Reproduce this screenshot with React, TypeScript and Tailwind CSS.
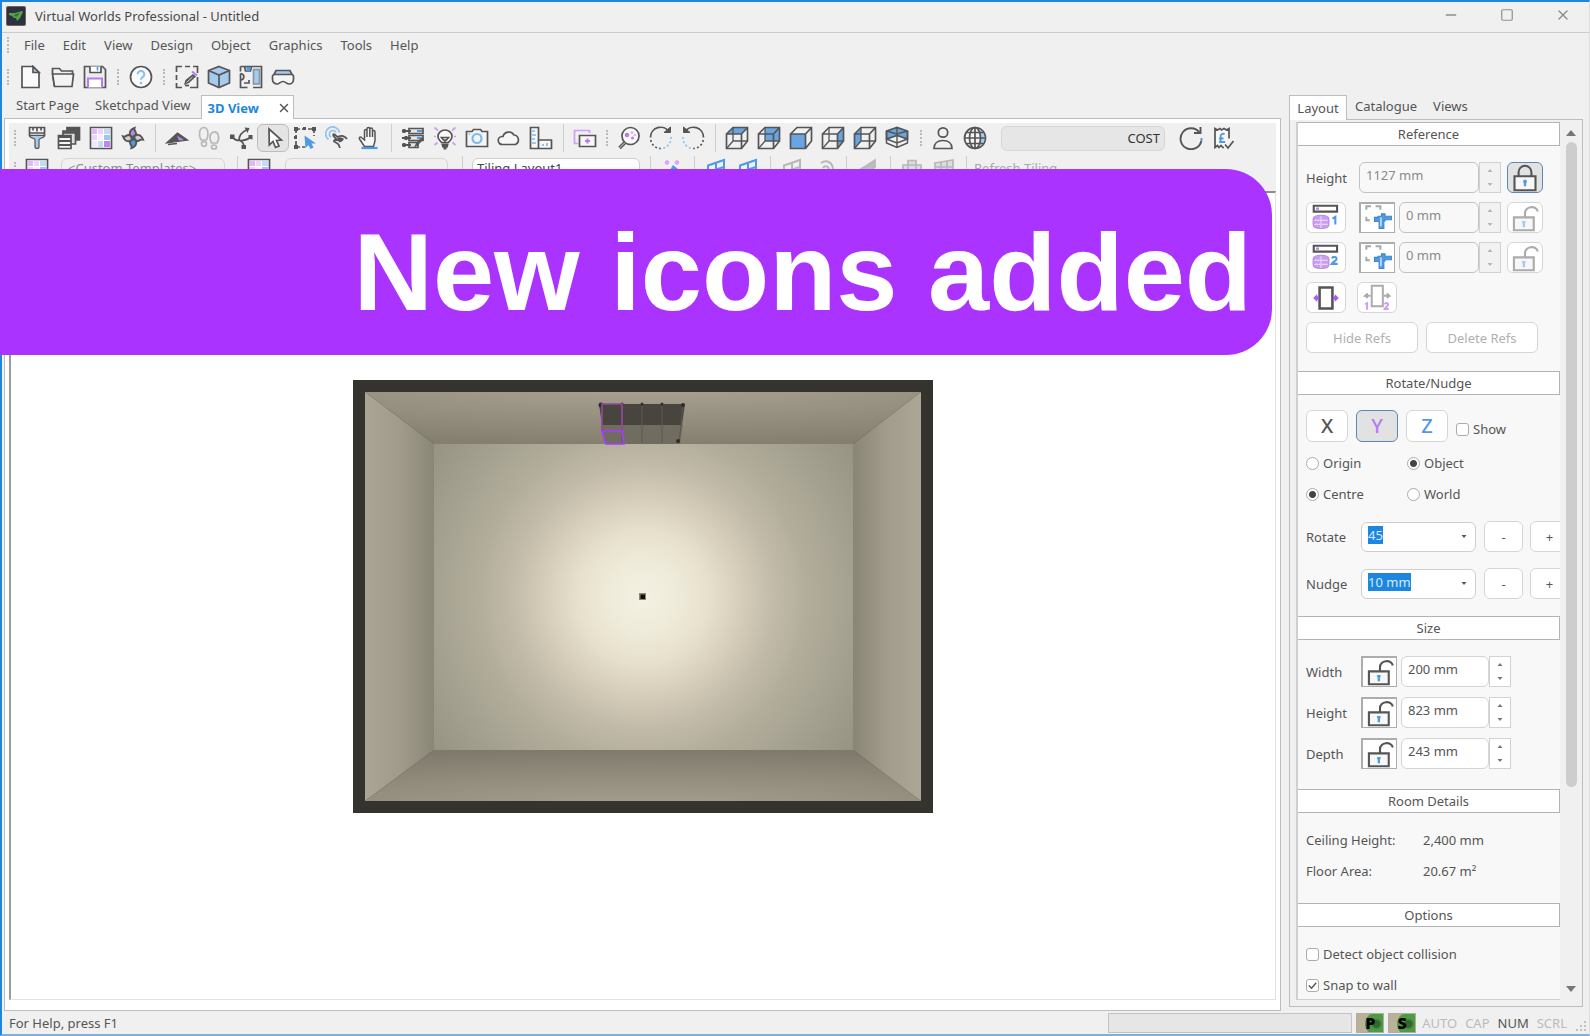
import { useState } from "react"
import type { ReactNode } from "react"
import { Minus, Square, X } from "lucide-react"
import clsx from "clsx"

const INK = "#555555"
const BLUE = "#4f9be3"
const SKY = "#a5cbee"
const VIOLET = "#b48ae8"
const LILAC = "#dcb8fa"
const MUTED = "#b8b8b8"

interface IconProps {
  children: ReactNode
  color?: string
  size?: string
}

function Icon({ children, color = INK, size = "size-6" }: IconProps) {
  return (
    <svg
      viewBox="0 0 24 24"
      className={clsx("shrink-0", size)}
      fill="none"
      stroke={color}
      strokeWidth="1.7"
      aria-hidden="true"
    >
      {children}
    </svg>
  )
}

/* ---------- Main toolbar icons ---------- */

const NewIcon = () => (
  <Icon>
    <path d="M3 1.5h11l6 6v15H3z" fill="#fafafa" />
    <path d="M14 1.5v6h6z" fill={SKY} />
  </Icon>
)

const OpenIcon = () => (
  <Icon>
    <path d="M3.5 21.5 1.5 8V3.500h7l2 2.500h11V9" />
    <path d="M1.500 9h21l-1.500 12.500H3.500z" fill="#f4f4f4" />
  </Icon>
)

const SaveIcon = () => (
  <Icon>
    <path d="M1.500 1.500h18l3 3v18h-21z" fill="#ececec" />
    <path d="M7 1.500v6h11v-6" fill="#fff" />
    <path d="M14.500 2v3.500" stroke={BLUE} />
    <path d="M5 22.500V13.500h14v9" stroke="#b57bf5" strokeWidth="2" fill="#fff" />
  </Icon>
)

const HelpIcon = () => (
  <Icon>
    <circle cx="12" cy="12" r="10.500" fill="#fafafa" />
    <path d="M8.700 9.200a3.300 3.300 0 1 1 5.200 2.700c-1.300.9-1.900 1.500-1.900 2.900" stroke="#8cc2f0" strokeWidth="2.200" />
    <circle cx="12" cy="18" r="1.300" fill="#8cc2f0" stroke="none" />
  </Icon>
)

const SketchpadIcon = () => (
  <Icon>
    <path d="M1.500 7V1.500H7M10 1.500h5M18 1.500h4.500V8M22.500 12v10.500H15M1.500 10v5M1.500 18v4.500H7" />
    <path d="m9 20 1.500-5L18 9l3 2.500-7 6.500z" fill={INK} stroke="none" />
    <path d="m11.500 17.500 6-5.500" stroke="#ddd" strokeWidth="1" />
    <path d="m17 6.500 5 4" stroke="#b57bf5" strokeWidth="2" />
    <path d="M10 20.500h4" />
  </Icon>
)

const CubeIcon = () => (
  <Icon>
    <path d="m12 1.500 10.500 4v12.500L12 22.500 1.500 18V5.500z" fill={SKY} />
    <path d="M1.500 5.500 12 10l10.500-4.500M12 10v12.500" />
  </Icon>
)

const PlanIcon = () => (
  <Icon>
    <path d="M1.500 1.500h21v21h-8.500" />
    <path d="M1.500 1.500v5M5.500 1.500l1 4.500h5l1-4.500" />
    <path d="M7 2h5l-1 4H8z" fill={BLUE} stroke="none" />
    <path d="M1.500 8.500C6 9 6 14.500 1.500 15M1.500 8.500V22.500h7M5 18h5v-3" />
    <rect x="14.500" y="4.500" width="6" height="14.500" fill={SKY} stroke="#8a97a6" />
  </Icon>
)

const GogglesIcon = () => (
  <Icon>
    <path d="M3 9.500 5 5.500h14l2 4" fill={SKY} />
    <path
      d="M3.500 9.500h17a2 2 0 0 1 2 2v3a4.500 4.500 0 0 1-4.500 4.500c-2.500 0-3-2.500-6-2.500s-3.500 2.500-6 2.500a4.500 4.500 0 0 1-4.500-4.500v-3a2 2 0 0 1 2-2z"
      fill="#f5f5f5"
    />
  </Icon>
)

/* ---------- View toolbar icons ---------- */

const BrushIcon = () => (
  <Icon>
    <path d="M4.500 1.500h15v8h-15z" fill="#f5f5f5" />
    <path d="M8 1.500v3M12 1.500v4M16 1.500v3M4.500 7h15" />
    <path d="M4.500 9.500c0 3 5.500 2 5.500 4.500v6.500a2 2 0 0 0 4 0V14c0-2.500 5.500-1.500 5.500-4.500z" fill={SKY} strokeWidth="1.200" />
  </Icon>
)

const LayersIcon = () => (
  <Icon>
    <path d="M10 1.500h12.500V14H10z" fill={INK} />
    <path d="M6 5h12.500v13H6z" fill="#ddd" />
    <path d="M6 6.500h12.500" strokeWidth="2.500" />
    <path d="M1.500 9.500H14v13H1.500z" fill="#f5f5f5" />
    <path d="M1.500 11H14M1.500 15H14M1.500 19H14" strokeWidth="2" />
  </Icon>
)

const SwatchIcon = () => (
  <Icon>
    <path d="M1.500 1.500h21v21h-21z" fill="#fff" />
    <g stroke="none">
      <path d="M3 3h5v5H3z" fill="#e3b5fb" />
      <path d="M9 3h5v5H9zM3 9h5v5H3z" fill="#efd3ff" />
      <path d="M15 3h6v5h-6zM9 15h5v6H9z" fill="#c3dcf5" />
      <path d="M15 9h6v5h-6z" fill="#9cc7f0" />
      <path d="M3 15h5v6H3z" fill="#f3e6fd" />
      <path d="M9 9h5v5H9z" fill="#faf0ff" />
      <path d="M15 15h6v6h-6z" fill="#c286f2" />
    </g>
  </Icon>
)

const FanIcon = () => (
  <Icon>
    <g strokeWidth="1.900">
      <path d="M12 12C7 9 8 4 13.500 2c-1 2.500 2 3.500 1.500 6z" fill={VIOLET} />
      <path d="M12 12c3-5 8-4 10 1.500-2.500-1-3.500 2-6 1.500z" fill="#d0d0d0" />
      <path d="M12 12c5 3 4 8-1.500 10 1-2.500-2-3.500-1.500-6z" fill={BLUE} />
      <path d="M12 12c-3 5-8 4-10-1.500 2.500 1 3.500-2 6-1.500z" fill="#d0d0d0" />
    </g>
    <circle cx="12" cy="12" r="2.500" fill={INK} stroke="none" />
  </Icon>
)

const PlaneIcon = () => (
  <Icon>
    <path d="m1.500 17 11-10 10 7z" fill={INK} strokeWidth="1.200" />
    <path d="m12 9.500 7 4.500-5 .5z" fill={VIOLET} stroke="none" />
    <path d="m3 18.500 9-1" />
  </Icon>
)

const FootstepsIcon = () => (
  <Icon color={MUTED}>
    <path d="M4 14C1 9 2.500 2 6.500 1.500c5 0 5.500 7 3 12.500z" />
    <ellipse cx="7" cy="18" rx="2.500" ry="2.300" />
    <path d="M14.500 17c-3-5-1.500-10.500 2.500-11s6.500 5.500 3 11z" />
    <ellipse cx="17" cy="21" rx="2.500" ry="2" />
  </Icon>
)

const BranchIcon = () => (
  <Icon>
    <path d="M3.500 11c1.500 2.500 4.500 3.500 7.500 3.500 4 0 7-.5 10-3M10 14.500C10 9 13 6 17.500 4M11 14.500c3 1.500 4 4 4 6.500" />
    <g fill={INK} stroke="none">
      <path d="m15.500 1.500 5 .5-2 5zM19.500 9h4v4.500l-4-1zM12.500 19h4.500v4h-4.500zM1 8.500h4.500V13H1z" />
    </g>
  </Icon>
)

const PointerIcon = () => (
  <Icon>
    <path d="m8 3 .3 16 3.700-3.500 2.500 6 3.500-1.500-2.500-5.500 5-.5z" fill="#fff" />
  </Icon>
)

const MarqueeIcon = () => (
  <Icon>
    <path d="M3 3h18v7M3 3v18h9" strokeDasharray="4 2" />
    <g fill={INK} stroke="none">
      <path d="M1 1h4v4H1zM19 1h4v4h-4zM1 19h4v4H1zM10 1h3v3h-3zM1 10h3v3H1z" />
    </g>
    <path d="m11.500 9.500 1 12.500 3-3 2 4 3-1.500-2-4h4.500z" fill={BLUE} stroke="none" />
  </Icon>
)

const TouchIcon = () => (
  <Icon>
    <path d="M3.500 13.500a7 7 0 1 1 11-7" stroke="#8fc3f0" />
    <path d="M6 11a3.500 3.500 0 1 1 5-4.500" stroke="#8fc3f0" />
    <path
      d="M8 8.500c1-1 2 0 4.500 2.500 3-1.500 7-1.500 9.500 2M8 8.500c0 2 3 4 4 5.500-2 0-3.500 0-3 1.500 2 1 3.500 1.500 4.500 3l1.500 3.500"
      strokeWidth="1.800"
    />
    <path d="M12 12c3-1.500 5-.5 7 1l-2 2.500-3 1z" fill={INK} stroke="none" />
  </Icon>
)

const HandIcon = () => (
  <Icon>
    <path
      d="M7.500 20.500 2.500 13c-.8-1.600 1-2.600 2-1.500L7.500 14V5c0-2 2.500-2 2.500 0v6V3c0-2 2.800-2 2.800 0v8V3.500c0-2 2.700-2 2.700 0V11 6c0-1.900 2.500-1.900 2.500 0v9l-1.500 5.500z"
      fill="#f7f7f7"
      strokeWidth="1.500"
    />
    <path d="M4.500 22h16" stroke={BLUE} strokeWidth="2.200" />
  </Icon>
)

const ListEditIcon = () => (
  <Icon>
    <path d="M8 2.500h14v5H8zM8 9.500h14v5H8zM8 16.500h9v5H8z" fill="#e6e6e6" />
    <path d="M1 5h9M1 12h9M1 19h9" strokeWidth="2.200" />
    <path d="M3 3v4M5 10v4M3 17v4" strokeWidth="3" />
    <path d="M16 5h5M16 12h4" stroke={BLUE} strokeWidth="2" />
    <path d="m13 22 2-5 6-6 2 2-6 6z" fill={INK} stroke="none" />
  </Icon>
)

const BulbIcon = () => (
  <Icon>
    <path d="M8.500 16.500c-1.500-2-3.500-3-3.500-6a7 6.500 0 0 1 14 0c0 3-2 4-3.500 6z" fill="#fafafa" />
    <path d="M8.500 11.500h7L13.500 14h-3zM12 14v3" />
    <path d="M8.500 18.500h7M9 20.500h6M10.500 22.500h3" strokeWidth="1.800" />
    <path d="M1.500 1.500 5 4.500M22.500 1.500 19 4.500M1 10.500h2M21 10.500h2M1.500 19l3-2.500M22.500 19l-3-2.500" stroke="#cf9df5" />
  </Icon>
)

const CameraIcon = () => (
  <Icon>
    <path d="M1.500 5.500H7L8.500 3.500h7L17 5.500h5.500v15h-21z" fill="#f5f5f5" />
    <circle cx="12" cy="12.500" r="4.500" stroke="#7fb9ec" strokeWidth="2.200" />
    <path d="M3.500 8h2" stroke={SKY} />
  </Icon>
)

const CloudIcon = () => (
  <Icon>
    <path d="M5.500 18.500a4 4 0 0 1-.5-8h1a6 6 0 0 1 11-1.500 5 5 0 0 1 1.500 9.500z" fill="#f7f7f7" />
  </Icon>
)

const RulerIcon = () => (
  <Icon>
    <path d="M1.500 1.500h8v12.500h13v8.500h-21z" fill="#f7f7f7" />
    <path d="M9.500 14v8.500" />
    <path d="M3 5h3M3 9h4M3 13h3M3 17h4M14 20v-2M18 20v-3" stroke="#7fb9ec" />
  </Icon>
)

const DuplicateIcon = () => (
  <Icon>
    <path d="M5 17.500H1.500V4.500h15V7" stroke="#cba3f2" />
    <path d="M6.500 9.500h16v11h-16z" fill="#f7f7f7" />
    <path d="M14.500 12.500v5M12 15h5" stroke="#b57bf5" strokeWidth="2" />
  </Icon>
)

const ZoomIcon = () => (
  <Icon>
    <circle cx="13.500" cy="10" r="8.500" fill="#fafafa" />
    <path d="m8 16.500-5.500 5.500" strokeWidth="3.600" />
    <path d="m8 16.500-5.500 5.500" stroke="#ddd" strokeWidth="1" />
    <g stroke="none" fill="#b57bf5">
      <circle cx="10" cy="9" r="2.300" />
      <circle cx="15.500" cy="12" r="1.500" />
      <circle cx="15" cy="6.500" r="1.500" fill={LILAC} />
      <circle cx="18" cy="9" r="1.300" fill={LILAC} />
    </g>
  </Icon>
)

const RotateRightIcon = () => (
  <Icon>
    <path d="M1.500 11.500A10 10 0 0 1 20 6" />
    <path d="M15 6.500h6.500V1z" fill={INK} strokeWidth="1" />
    <path d="M1.800 14a10 10 0 0 0 10 8.500" strokeDasharray="2 2.200" />
    <path d="M22 11a10.500 10.500 0 0 1-10 11.500" stroke="#8fc3f0" strokeDasharray="2 2.200" />
  </Icon>
)

const RotateLeftIcon = () => (
  <Icon>
    <path d="M22.500 11.500A10 10 0 0 0 4 6" />
    <path d="M9 6.500H2.500V1z" fill={INK} strokeWidth="1" />
    <path d="M22.200 14a10 10 0 0 1-10 8.500" strokeDasharray="2 2.200" />
    <path d="M2 11a10.500 10.500 0 0 0 10 11.500" stroke="#8fc3f0" strokeDasharray="2 2.200" />
  </Icon>
)

const FACES = {
  top: "M1.500 8 8 1.500h14.500L16.500 8z",
  back: "M8 1.500h14.500V15H8z",
  front: "M1.500 8h15v14.500h-15z",
  right: "M16.500 8 22.500 1.500V15l-6 7.500z",
  left: "M1.500 8 8 1.500V15l-6.500 7.500z",
}

function WireCube({ face }: { face: keyof typeof FACES }) {
  return (
    <Icon>
      <path d={FACES[face]} fill="#69a5e2" stroke="none" />
      <path d="M1.500 8h15v14.500h-15zM1.500 8 8 1.500h14.500V15l-6 7.500M16.500 8l6-6.500" />
      {face !== "front" && <path d="M8 1.500V15h14.500M8 15l-6.500 7.500" strokeWidth="1.300" />}
    </Icon>
  )
}

const RoomCubeIcon = () => (
  <Icon>
    <path d="m1.500 5 10.500-3.500L22.500 5v8L12 9.500 1.500 13z" fill="#69a5e2" />
    <path d="M1.500 5v12L12 21.500 22.500 17V5M1.500 5 12 8l10.500-3M12 1.500v20M1.500 13 12 17l10.500-4" strokeWidth="1.400" />
  </Icon>
)

const PersonIcon = () => (
  <Icon>
    <circle cx="12" cy="6.500" r="4.700" />
    <path d="M3 22.500c0-5 3.500-8 9-8s9 3 9 8z" />
  </Icon>
)

const GlobeIcon = () => (
  <Icon>
    <circle cx="12" cy="12" r="10.500" fill="#f5f5f5" />
    <path d="M17 3.500c6 4 6 13 0 17z" fill={SKY} stroke="none" />
    <path d="M12 1.500v21M1.500 12h21M3 6.500h18M3 17.500h18" />
    <ellipse cx="12" cy="12" rx="5.500" ry="10.500" />
  </Icon>
)

const RefreshIcon = () => (
  <Icon>
    <path d="M20.500 6.500A10.500 10.500 0 1 0 22.300 15" strokeWidth="1.900" />
    <path d="M15 7h6.500V1" strokeWidth="1.900" />
    <path d="M22.500 12v3" stroke={BLUE} strokeWidth="2" />
  </Icon>
)

const ReceiptIcon = () => (
  <Icon>
    <path d="M13 21.500h-1l-2-2-2 2-1.500-2-2.500 2V2.500l2.500 1.500 2.500-1.500L10.500 4 13 2.500 15.500 4 18 2.500v10" fill="#f7f7f7" />
    <path d="M13.500 8.500a2.200 2.200 0 0 0-3.800 1.500v4c0 1-.5 1.700-1.500 2h6M8 12.500h4.500" stroke={BLUE} strokeWidth="1.800" />
    <path d="m14 18.500 3 3.500 5.500-7" />
  </Icon>
)

/* ---------- Tiling toolbar icons ---------- */

const SparkleIcon = () => (
  <Icon>
    <path d="m4 22 9-15 5 4z" fill={BLUE} stroke="none" />
    <g fill={LILAC} stroke="#d68af5" strokeWidth="1">
      <circle cx="7" cy="4.500" r="1.700" />
      <circle cx="17" cy="4.500" r="1.700" />
    </g>
  </Icon>
)

function SlantTile({ muted = false }: { muted?: boolean }) {
  return (
    <Icon color={muted ? MUTED : BLUE}>
      <path d="M4 7.500 20 2v16L4 22zM12 5v15M4 14l16-5" strokeWidth="2" />
    </Icon>
  )
}

const GreyArcIcon = () => (
  <Icon color={MUTED}>
    <path d="M9 5c5-4 12-1 12 7M11 10c2-3 6-2 6 2" strokeWidth="2" />
  </Icon>
)

const GreyPenIcon = () => (
  <Icon color={MUTED}>
    <path d="m3 12 7-4 9-6v7l-9 8z" fill="#bdbdbd" />
  </Icon>
)

const GreyBoxesIcon = () => (
  <Icon color={MUTED}>
    <path d="M3 7h18v14H3zM8 7V2.500h8V7M8 7v10M16 7v10M3 12h18" fill="#dddddd" />
  </Icon>
)

const GreyRowsIcon = () => (
  <Icon color={MUTED}>
    <path d="M3 5 21 2v18H3zM9 4v16M15 3v17M3 9h18M3 14h18" fill="#dddddd" />
  </Icon>
)

/* ---------- Side panel icons ---------- */

function LockIcon({ open = false, muted = false }: { open?: boolean; muted?: boolean }) {
  return (
    <Icon color={muted ? "#ababab" : INK} size="size-7">
      <path d={open ? "M2.500 11.500h17v11h-17z" : "M3 10.500h18v12H3z"} strokeWidth="1.800" fill="#f7f7f7" />
      {open ? (
        <path d="M12 11.500V8c0-6 9.500-7.500 11-1.500" strokeWidth="1.800" />
      ) : (
        <path d="M6.500 10.500V7a5.500 5.500 0 0 1 11 0v3.500" strokeWidth="1.800" />
      )}
      <path d={open ? "M11 14.500v5.500M9.500 15.500h3" : "M12 13.500V19M10.500 15h3"} stroke={muted ? SKY : BLUE} strokeWidth="2" />
    </Icon>
  )
}

function RefPointIcon({ index }: { index: 1 | 2 }) {
  return (
    <Icon size="size-7">
      <path d="M1.500 1.500h20v5h-20z" fill="#fff" strokeWidth="1.800" />
      <path d="M3.500 4H6" stroke={VIOLET} strokeWidth="2" />
      <path d="M1 13c0-4.500 13.500-4.500 13.500 0v4.500c0 4.500-13.500 4.500-13.500 0z" fill="#c89ff0" stroke="#b98be6" strokeWidth="1" />
      <path d="M2 14h11.500M2 17.500h11.500M7.700 10.500v10" stroke="#e9d5fb" strokeWidth="1" />
      {index === 1 ? (
        <path d="m17.500 12.500 2.500-1.500v6.500" stroke={BLUE} strokeWidth="1.800" />
      ) : (
        <path d="M17 12.300c1-2 4.500-1.500 4 .7-.3 1.500-2.500 2-4 4h5" stroke={BLUE} strokeWidth="1.800" />
      )}
    </Icon>
  )
}

const TapeIcon = () => (
  <Icon size="size-7">
    <path d="M2 5V2h4M10 2h4v3M2 11v3h3" stroke="#a8a8a8" />
    <path d="M12 10.500h3V8.500h3v2h6v3h-6v1h-1v6.500h-4V15H9v-3.500h3z" fill={BLUE} stroke="#3f86cf" strokeWidth="1" />
    <path d="M14.500 11.500v7.500" stroke="#b8dcfb" strokeWidth="1.500" />
  </Icon>
)

function SpreadIcon({ muted = false }: { muted?: boolean }) {
  return (
    <Icon color={muted ? "#ababab" : INK} size="size-7">
      {muted ? (
        <>
          <path d="M7.500 1.500h9.500v17.500H7.500z" strokeWidth="1.700" fill="#fff" />
          <path d="M6.500 10H2l2-2M2 10l2 2M18 10h4.500l-2-2M22.500 10l-2 2" />
          <path d="m2 17.500 1.500-1V22M18.500 17.500c.5-1.500 3-1.500 3 0 0 1.500-2 2-3 4H22" stroke="#cf9df5" />
        </>
      ) : (
        <>
          <path d="M6.500 3h11v18h-11z" strokeWidth="2.200" fill="#fff" />
          <path d="M4.500 8.500 1 12l3.500 3.500v-2H6v-3H4.500z" fill="#a55fe8" stroke="none" />
          <path d="M19.500 8.500 23 12l-3.500 3.500v-2H18v-3h1.500z" fill="#a55fe8" stroke="none" />
        </>
      )}
    </Icon>
  )
}

/* ---------- Shared controls ---------- */

function ToolButton({ label, active, children }: { label: string; active?: boolean; children: ReactNode }) {
  return (
    <button
      aria-label={label}
      className={clsx(
        "flex h-7 w-8 shrink-0 items-center justify-center rounded-md border",
        active ? "border-[#bdbdbd] bg-[#e4e4e4]" : "border-transparent hover:bg-[#e4e4e4]",
      )}
    >
      {children}
    </button>
  )
}

function Grip() {
  return (
    <div className="flex w-3 shrink-0 justify-center">
      <div className="h-4 border-l-2 border-dotted border-[#b9b9b9]" />
    </div>
  )
}

function Divider() {
  return (
    <div className="flex w-3 shrink-0 justify-center">
      <div className="h-7 w-px bg-[#cfcfcf]" />
    </div>
  )
}

function Section({ title, children }: { title: string; children: ReactNode }) {
  return (
    <section>
      <h2 className="flex h-6 items-center justify-center border-y border-r border-[#b3b3b3] bg-white">{title}</h2>
      {children}
    </section>
  )
}

function Arrow({ up = false, className }: { up?: boolean; className: string }) {
  return (
    <svg viewBox="0 0 10 6" className={className} fill="currentColor" aria-hidden="true">
      <path d={up ? "M0 6 5 0l5 6z" : "M0 0h10L5 6z"} />
    </svg>
  )
}

function Spinner({ disabled }: { disabled?: boolean }) {
  return (
    <div
      className={clsx(
        "flex h-full w-[22px] flex-col border border-[#d2d2d2]",
        disabled ? "bg-[#f2f2f2] text-[#b5b5b5]" : "bg-white text-[#777777]",
      )}
    >
      <button aria-label="Increase" disabled={disabled} className="flex flex-1 items-center justify-center">
        <Arrow up className="h-[3px] w-[6px]" />
      </button>
      <button aria-label="Decrease" disabled={disabled} className="flex flex-1 items-center justify-center">
        <Arrow className="h-[3px] w-[6px]" />
      </button>
    </div>
  )
}

interface FieldProps {
  id: string
  value: string
  width: string
  disabled?: boolean
}

function Field({ id, value, width, disabled }: FieldProps) {
  return (
    <div className="flex h-[31px]">
      <input
        id={id}
        aria-label={id}
        defaultValue={value}
        disabled={disabled}
        className={clsx(
          "h-full rounded-md border px-1.5 pb-1.5",
          width,
          disabled ? "border-[#c2c2c2] bg-[#f8f8f8] text-[#8a8a8a]" : "border-[#d4d4d4] bg-white",
        )}
      />
      <Spinner disabled={disabled} />
    </div>
  )
}

function PanelButton({ label, width = "w-10", active, children }: { label: string; width?: string; active?: boolean; children: ReactNode }) {
  return (
    <button
      aria-label={label}
      className={clsx(
        "flex h-[31px] shrink-0 items-center justify-center rounded-md border",
        width,
        active ? "border-[#5d87b8] bg-[#e2e2e2]" : "border-[#d6d6d6] bg-white",
      )}
    >
      {children}
    </button>
  )
}

function SunkenButton({ label, children }: { label: string; children: ReactNode }) {
  return (
    <button
      aria-label={label}
      className="flex h-[31px] w-9 shrink-0 items-center justify-center border-2 border-r border-b border-[#adadad] bg-white"
    >
      {children}
    </button>
  )
}

function Radio({ name, label, checked }: { name: string; label: string; checked?: boolean }) {
  return (
    <label className="flex items-center gap-1">
      <input
        type="radio"
        name={name}
        defaultChecked={checked}
        className="size-[13px] appearance-none rounded-full border border-[#ababab] bg-white checked:bg-[radial-gradient(circle,#444_3px,white_4px)]"
      />
      {label}
    </label>
  )
}

function Checkbox({ label, checked }: { label: string; checked?: boolean }) {
  return (
    <label className="flex items-center gap-1">
      <span className="grid size-[13px] place-items-center">
        <input
          type="checkbox"
          defaultChecked={checked}
          className="peer col-start-1 row-start-1 size-[13px] appearance-none rounded-[3px] border border-[#ababab] bg-white"
        />
        <svg
          viewBox="0 0 12 12"
          className="pointer-events-none invisible col-start-1 row-start-1 size-[11px] peer-checked:visible"
          fill="none"
          stroke="#555"
          strokeWidth="1.500"
        >
          <path d="m2 6 3 3 5-6" />
        </svg>
      </span>
      {label}
    </label>
  )
}

function StepRow({ label, value }: { label: string; value: string }) {
  return (
    <div className="flex h-[31px] items-center">
      <span className="w-[55px] shrink-0">{label}</span>
      <button
        aria-label={label}
        aria-haspopup="listbox"
        className="flex h-[30px] w-[115px] shrink-0 items-center justify-between rounded-md border border-[#cecece] bg-white pr-2 pl-1.5"
      >
        <span className="mb-1 bg-[#1c86e0] text-[#d7ebff]">{value}</span>
        <Arrow className="h-[3px] w-[6px]" />
      </button>
      <div className="ml-2 flex gap-[7px]">
        <PanelButton label={`${label} minus`} width="w-[39px]">
          -
        </PanelButton>
        <PanelButton label={`${label} plus`} width="w-[39px]">
          +
        </PanelButton>
      </div>
    </div>
  )
}

/* ---------- Page regions ---------- */

const MENUS = ["File", "Edit", "View", "Design", "Object", "Graphics", "Tools", "Help"]

function TitleBar() {
  return (
    <header className="flex h-[31px] items-center border-b border-[#cccccc] pb-0.5 pl-1 text-[#4a4a4a]">
      <svg viewBox="0 0 20 20" className="size-5" aria-hidden="true">
        <rect width="20" height="20" rx="2" fill="#6b6457" />
        <rect x="1" y="1" width="18" height="18" rx="1" fill="#2b3140" />
        <path d="m3 7 6 0 7-2 1 1-3 6-3 3-1-3-2 0-2-2-3-1z" fill="#58a048" />
        <path d="m8 9 6-2-4 4z" fill="#2f6a35" />
      </svg>
      <h1 className="ml-[9px]">Virtual Worlds Professional - Untitled</h1>
      <div className="mr-3 ml-auto flex gap-7 pb-0.5 text-[#8d8d8d]">
        <button aria-label="Minimise" className="flex size-7 items-center justify-center">
          <Minus className="size-4" />
        </button>
        <button aria-label="Maximise" className="flex size-7 items-center justify-center">
          <Square className="size-3.5" />
        </button>
        <button aria-label="Close" className="flex size-7 items-center justify-center">
          <X className="size-4" />
        </button>
      </div>
    </header>
  )
}

function MainToolbar() {
  return (
    <div className="flex h-9 items-center gap-px">
      <Grip />
      <div className="flex">
        <ToolButton label="New"><NewIcon /></ToolButton>
        <ToolButton label="Open"><OpenIcon /></ToolButton>
        <ToolButton label="Save"><SaveIcon /></ToolButton>
      </div>
      <Grip />
      <ToolButton label="Help"><HelpIcon /></ToolButton>
      <Grip />
      <div className="flex">
        <ToolButton label="Sketchpad"><SketchpadIcon /></ToolButton>
        <ToolButton label="3D"><CubeIcon /></ToolButton>
        <ToolButton label="Plan"><PlanIcon /></ToolButton>
        <ToolButton label="VR"><GogglesIcon /></ToolButton>
      </div>
    </div>
  )
}

function ViewToolbar() {
  return (
    <div className="flex h-[30px] items-center">
      <Grip />
      <ToolButton label="Paint"><BrushIcon /></ToolButton>
      <ToolButton label="Layers"><LayersIcon /></ToolButton>
      <ToolButton label="Tiles"><SwatchIcon /></ToolButton>
      <ToolButton label="Fan"><FanIcon /></ToolButton>
      <Divider />
      <ToolButton label="Plane"><PlaneIcon /></ToolButton>
      <ToolButton label="Walk"><FootstepsIcon /></ToolButton>
      <ToolButton label="Orbit"><BranchIcon /></ToolButton>
      <ToolButton label="Select" active><PointerIcon /></ToolButton>
      <ToolButton label="Select area"><MarqueeIcon /></ToolButton>
      <ToolButton label="Touch"><TouchIcon /></ToolButton>
      <ToolButton label="Pan"><HandIcon /></ToolButton>
      <Divider />
      <ToolButton label="Edit list"><ListEditIcon /></ToolButton>
      <ToolButton label="Lighting"><BulbIcon /></ToolButton>
      <ToolButton label="Camera"><CameraIcon /></ToolButton>
      <ToolButton label="Cloud"><CloudIcon /></ToolButton>
      <ToolButton label="Measure"><RulerIcon /></ToolButton>
      <Divider />
      <ToolButton label="Duplicate"><DuplicateIcon /></ToolButton>
      <Grip />
      <ToolButton label="Zoom"><ZoomIcon /></ToolButton>
      <ToolButton label="Rotate right"><RotateRightIcon /></ToolButton>
      <ToolButton label="Rotate left"><RotateLeftIcon /></ToolButton>
      <Divider />
      <ToolButton label="Top"><WireCube face="top" /></ToolButton>
      <ToolButton label="Back"><WireCube face="back" /></ToolButton>
      <ToolButton label="Front"><WireCube face="front" /></ToolButton>
      <ToolButton label="Right"><WireCube face="right" /></ToolButton>
      <ToolButton label="Left"><WireCube face="left" /></ToolButton>
      <ToolButton label="Room"><RoomCubeIcon /></ToolButton>
      <div className="ml-0.5 flex"><Grip /></div>
      <ToolButton label="Person"><PersonIcon /></ToolButton>
      <ToolButton label="Web"><GlobeIcon /></ToolButton>
      <input
        aria-label="Cost"
        readOnly
        value="COST"
        className="mx-2.5 h-[25px] w-[164px] rounded-md border border-[#d6d6d6] bg-[#e6e6e6] px-1 text-right text-[#333333]"
      />
      <ToolButton label="Refresh"><RefreshIcon /></ToolButton>
      <ToolButton label="Receipt"><ReceiptIcon /></ToolButton>
    </div>
  )
}

function TilingToolbar() {
  return (
    <div className="flex h-[38px] items-center pb-1">
      <Grip />
      <ToolButton label="Template"><SwatchIcon /></ToolButton>
      <select
        aria-label="Template"
        className="ml-2 h-[25px] w-[164px] appearance-none rounded-md border border-[#d6d6d6] bg-[#f0f0f0] px-1.5 pb-1 text-[#8a8a8a]"
      >
        <option>&lt;Custom Templates&gt;</option>
      </select>
      <div className="ml-1.5 flex"><Divider /></div>
      <ToolButton label="Tile"><SwatchIcon /></ToolButton>
      <select aria-label="Tile" className="ml-2.5 h-[25px] w-[163px] appearance-none rounded-md border border-[#d6d6d6] bg-[#f0f0f0]" />
      <div className="ml-2 flex"><Divider /></div>
      <select
        aria-label="Layout"
        className="ml-1 h-[25px] w-[168px] appearance-none rounded-md border border-[#cecece] bg-white px-1 pb-1 text-[#444444]"
      >
        <option>Tiling Layout1</option>
      </select>
      <div className="ml-1 flex"><Divider /></div>
      <ToolButton label="Magic"><SparkleIcon /></ToolButton>
      <Divider />
      <ToolButton label="Tile wall"><SlantTile /></ToolButton>
      <ToolButton label="Tile floor"><SlantTile /></ToolButton>
      <Divider />
      <ToolButton label="Grid"><SlantTile muted /></ToolButton>
      <ToolButton label="Arc"><GreyArcIcon /></ToolButton>
      <Divider />
      <ToolButton label="Pen"><GreyPenIcon /></ToolButton>
      <Divider />
      <ToolButton label="Boxes"><GreyBoxesIcon /></ToolButton>
      <ToolButton label="Rows"><GreyRowsIcon /></ToolButton>
      <Divider />
      <button disabled className="px-0.5 pb-1 text-[#a8a8a8]">Refresh Tiling</button>
    </div>
  )
}

function Room() {
  return (
    <svg viewBox="0 0 580 433" className="w-[580px]" role="img" aria-label="Room seen from above">
      <defs>
        <radialGradient id="floor" gradientUnits="userSpaceOnUse" cx="290" cy="217" r="265">
          <stop offset="0" stopColor="#f3f1e3" />
          <stop offset="0.130" stopColor="#efebda" />
          <stop offset="0.250" stopColor="#e7e0cc" />
          <stop offset="0.380" stopColor="#d4ccb9" />
          <stop offset="0.500" stopColor="#c2baa8" />
          <stop offset="0.620" stopColor="#b2ad9b" />
          <stop offset="0.800" stopColor="#a4a08f" />
          <stop offset="1" stopColor="#969282" />
        </radialGradient>
        <linearGradient id="left" x1="0" x2="1">
          <stop offset="0" stopColor="#aaa594" />
          <stop offset="0.500" stopColor="#a09b8b" />
          <stop offset="1" stopColor="#8b8777" />
        </linearGradient>
        <linearGradient id="right" x1="1" x2="0">
          <stop offset="0" stopColor="#aba695" />
          <stop offset="0.500" stopColor="#a19c8c" />
          <stop offset="1" stopColor="#8a8676" />
        </linearGradient>
        <radialGradient id="top" cx="0.500" cy="-0.100" r="1.100">
          <stop offset="0" stopColor="#aaa393" />
          <stop offset="0.500" stopColor="#979181" />
          <stop offset="1" stopColor="#857f70" />
        </radialGradient>
        <radialGradient id="bottom" cx="0.500" cy="1.100" r="1.100">
          <stop offset="0" stopColor="#a59f8e" />
          <stop offset="0.500" stopColor="#938e7e" />
          <stop offset="1" stopColor="#7f7a6b" />
        </radialGradient>
      </defs>
      <rect width="580" height="433" fill="#35332d" />
      <path d="M12 12h556L500 64H81z" fill="url(#top)" />
      <path d="M12 421h556l-68-51H81z" fill="url(#bottom)" />
      <path d="M12 12v409l69-51V64z" fill="url(#left)" />
      <path d="M568 12v409l-68-51V64z" fill="url(#right)" />
      <rect x="81" y="64" width="419" height="306" fill="url(#floor)" />
      <path d="m246 24 86 0-3 21h-80z" fill="#48443e" />
      <path d="M248 45h82l-3 19h-75z" fill="#706c60" />
      <path d="M269 24v39M289 24v39M309 24v39M330 25l-4 38" stroke="#5c584f" />
      <g fill="#302d29">
        <circle cx="248" cy="25" r="2.500" />
        <circle cx="269" cy="24" r="1.500" />
        <circle cx="289" cy="24" r="1.500" />
        <circle cx="309" cy="24" r="1.500" />
        <circle cx="330" cy="25" r="2" />
        <circle cx="325" cy="61" r="2" />
      </g>
      <path d="M249 51V24h20v27z" fill="none" stroke="#94479f" strokeWidth="1.700" />
      <path d="M249 51l4 13h18l-2-13z" fill="none" stroke="#a63cff" strokeWidth="1.700" />
      <rect x="286" y="213" width="7" height="7" fill="#8b8672" />
      <rect x="287.500" y="214.500" width="4.500" height="4.500" fill="#0d0d0d" />
    </svg>
  )
}

function Workspace() {
  return (
    <main className="flex min-w-0 flex-1 flex-col">
      <nav className="flex h-[23px] items-stretch pl-3">
        <button className="mr-4 mb-1">Start Page</button>
        <button className="mb-1">Sketchpad View</button>
        <div className="z-10 -mb-px ml-2.5 flex w-[93px] items-center justify-between border border-b-0 border-[#bdbdbd] bg-white px-1.5">
          <button className="font-bold text-[#1c86e0]">3D View</button>
          <button aria-label="Close tab">
            <X className="-mr-1 size-3.5" strokeWidth={2.5} />
          </button>
        </div>
      </nav>
      <div className="flex min-h-0 flex-1 flex-col border border-[#bdbdbd] bg-white p-1">
        <div className="bg-[#f0f0f0]">
          <ViewToolbar />
          <TilingToolbar />
        </div>
        <div className="mb-1.5 flex min-h-0 flex-1 items-center justify-center border-t-2 border-r border-b border-l-2 border-t-[#8c8c8c] border-r-[#e2e2e2] border-b-[#e2e2e2] border-l-[#9c9c9c]">
          <Room />
        </div>
      </div>
    </main>
  )
}

function SidePanel() {
  const [axis, setAxis] = useState("Y")
  const axes = [
    { name: "X", tone: "text-[#555555]" },
    { name: "Y", tone: "text-[#b57bf5]" },
    { name: "Z", tone: "text-[#4f9be3]" },
  ]

  return (
    <aside className="flex w-[294px] shrink-0 flex-col">
      <nav className="flex h-6 items-stretch">
        <button className="z-10 -mb-px w-[58px] border border-b-0 border-[#bdbdbd] bg-white">Layout</button>
        <button className="mb-0.5 ml-2">Catalogue</button>
        <button className="mb-0.5 ml-4">Views</button>
      </nav>
      <div className="flex min-h-0 flex-1 border border-[#bdbdbd] bg-[#f0f0f0] pt-0.5 pb-1.5 pl-1.5">
        <div className="min-w-0 flex-1 overflow-hidden border-b border-l-2 border-[#cfcfcf] bg-[#f8f8f8]">
          <Section title="Reference">
            <div className="flex flex-col gap-[9px] px-2 pt-4 pb-[18px]">
              <div className="flex items-center">
                <label htmlFor="Reference height" className="w-[53px]">Height</label>
                <Field id="Reference height" value="1127 mm" width="w-[120px]" disabled />
                <div className="ml-1.5 flex">
                  <PanelButton label="Lock height" width="w-9" active><LockIcon /></PanelButton>
                </div>
              </div>
              {([1, 2] as const).map((n) => (
                <div key={n} className="flex items-center">
                  <PanelButton label={`Pick reference ${n}`}><RefPointIcon index={n} /></PanelButton>
                  <div className="mr-1 ml-[13px] flex">
                    <SunkenButton label={`Measure reference ${n}`}><TapeIcon /></SunkenButton>
                  </div>
                  <Field id={`Reference ${n}`} value="0 mm" width="w-20" disabled />
                  <div className="ml-1.5 flex">
                    <PanelButton label={`Lock reference ${n}`} width="w-9"><LockIcon open muted /></PanelButton>
                  </div>
                </div>
              ))}
              <div className="flex gap-[11px]">
                <PanelButton label="Spread"><SpreadIcon /></PanelButton>
                <PanelButton label="Spread between references"><SpreadIcon muted /></PanelButton>
              </div>
              <div className="flex gap-2 text-[#b0b0b0]">
                <PanelButton label="Hide Refs" width="w-28">Hide Refs</PanelButton>
                <PanelButton label="Delete Refs" width="w-28">Delete Refs</PanelButton>
              </div>
            </div>
          </Section>

          <Section title="Rotate/Nudge">
            <div className="px-2 pt-[15px] pb-[17px]">
              <div className="flex items-center gap-2">
                {axes.map(({ name, tone }) => (
                  <button
                    key={name}
                    onClick={() => setAxis(name)}
                    className={clsx(
                      "h-8 w-[42px] rounded-md border text-xl font-medium",
                      tone,
                      axis === name ? "border-[#5d87b8] bg-[#e2e2e2]" : "border-[#d6d6d6] bg-white",
                    )}
                  >
                    {name}
                  </button>
                ))}
                <div className="pt-1.5"><Checkbox label="Show" /></div>
              </div>
              <div className="mt-3 grid grid-cols-[101px_1fr] gap-y-[13px]">
                <Radio name="pivot" label="Origin" />
                <Radio name="space" label="Object" checked />
                <Radio name="pivot" label="Centre" checked />
                <Radio name="space" label="World" />
              </div>
              <div className="mt-[18px] flex flex-col gap-4">
                <StepRow label="Rotate" value="45" />
                <StepRow label="Nudge" value="10 mm" />
              </div>
            </div>
          </Section>

          <Section title="Size">
            <div className="flex flex-col gap-[10px] px-2 pt-4 pb-5">
              {[
                ["Width", "200 mm"],
                ["Height", "823 mm"],
                ["Depth", "243 mm"],
              ].map(([label, value]) => (
                <div key={label} className="flex items-center">
                  <label htmlFor={label} className="w-[55px]">{label}</label>
                  <div className="mr-1 flex">
                    <SunkenButton label={`Lock ${label}`}><LockIcon open /></SunkenButton>
                  </div>
                  <Field id={label} value={value} width="w-[88px]" />
                </div>
              ))}
            </div>
          </Section>

          <Section title="Room Details">
            <dl className="grid grid-cols-[117px_1fr] gap-y-[13px] px-2 pt-[18px] pb-[23px]">
              <dt>Ceiling Height:</dt>
              <dd>2,400 mm</dd>
              <dt>Floor Area:</dt>
              <dd>20.67 m²</dd>
            </dl>
          </Section>

          <Section title="Options">
            <div className="flex flex-col gap-[13px] px-2 pt-[18px]">
              <Checkbox label="Detect object collision" />
              <Checkbox label="Snap to wall" checked />
            </div>
          </Section>
        </div>
        <div className="flex w-[22px] flex-col items-center py-2 text-[#777777]">
          <Arrow up className="h-[6px] w-[10px] shrink-0" />
          <div className="my-1.5 flex w-[11px] flex-1 flex-col">
            <div className="h-[77%] rounded-full bg-[#cdcdcd]" />
          </div>
          <Arrow className="h-[6px] w-[10px] shrink-0" />
        </div>
      </div>
    </aside>
  )
}

function StatusBadge({ letter }: { letter: string }) {
  return (
    <span className="flex h-5 w-7 items-center justify-center border border-[#b0ae9c] bg-[radial-gradient(circle_at_75%_55%,#34662f_15%,#4f9a45_25%,#4f9a45_50%,#b9b299_55%)] text-base font-black text-black">
      {letter}
    </span>
  )
}

function StatusBar() {
  return (
    <footer className="flex h-[23px] items-center pr-0.5 pl-[7px] text-[#bbbbbb]">
      <span className="text-[#555555]">For Help, press F1</span>
      <div className="ml-auto h-5 w-[244px] border border-[#c4c4c4] bg-[#e6e6e6]" />
      <div className="ml-1 flex gap-1">
        <StatusBadge letter="P" />
        <StatusBadge letter="S" />
      </div>
      <span className="ml-1.5">AUTO</span>
      <span className="ml-2">CAP</span>
      <span className="ml-2 text-[#555555]">NUM</span>
      <span className="ml-2">SCRL</span>
      <svg viewBox="0 0 12 12" className="mt-2 ml-2 size-3" fill="#c0c0c0" aria-hidden="true">
        <path d="M9 0h2v2H9zM9 4h2v2H9zM9 8h2v2H9zM5 4h2v2H5zM5 8h2v2H5zM1 8h2v2H1z" />
      </svg>
    </footer>
  )
}

export default function App() {
  return (
    <div className="relative font-['Noto_Sans','Open_Sans',sans-serif] text-[13px] leading-[18px] text-[#555555]">
      <div className="flex h-screen min-h-[1000px] flex-col border-t-2 border-r border-b-2 border-l-2 border-t-[#1c86e0] border-r-[#dcdcdc] border-b-[#7fb0dc] border-l-[#1c86e0] bg-[#f0f0f0]">
        <TitleBar />
        <div className="flex h-[26px] items-center gap-px pb-0.5">
          <Grip />
          <nav className="flex">
            {MENUS.map((menu) => (
              <button key={menu} className="px-[9px]">{menu}</button>
            ))}
          </nav>
        </div>
        <MainToolbar />
        <div className="flex min-h-0 flex-1 gap-2 pr-1.5 pl-0.5">
          <Workspace />
          <div className="flex pb-1"><SidePanel /></div>
        </div>
        <StatusBar />
      </div>

      {/* Announcement banner */}
      <div className="absolute top-[169px] left-0 flex h-[186px] w-[80%] items-center justify-end rounded-r-[46px] bg-[#aa33ff] pt-5 pr-5 font-['Liberation_Sans',sans-serif] text-[110px] font-bold whitespace-nowrap text-white">
        New icons added
      </div>
    </div>
  )
}
